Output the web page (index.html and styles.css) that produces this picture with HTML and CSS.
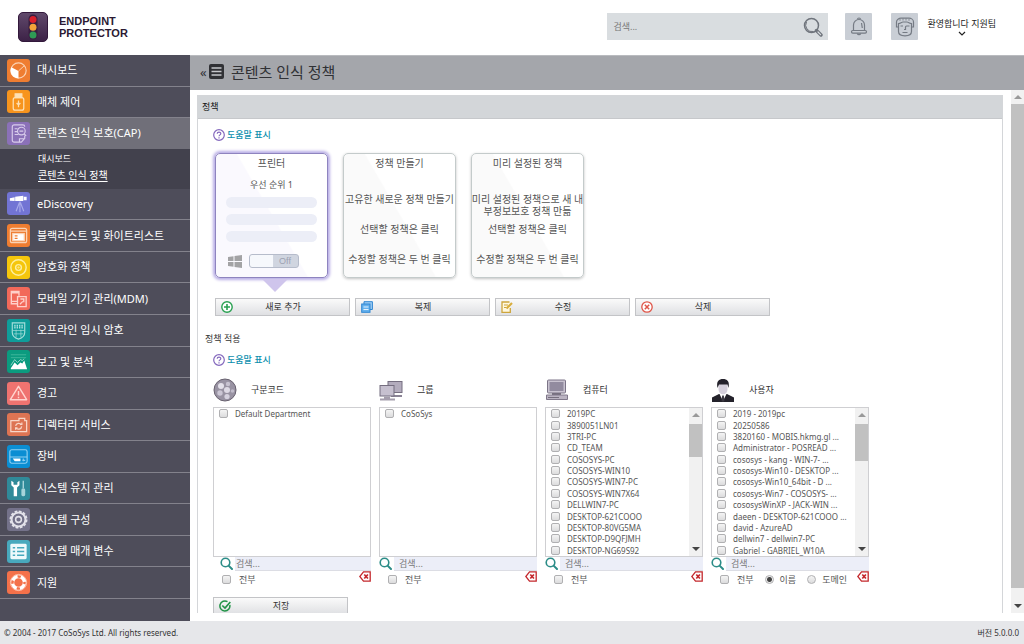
FILE: index.html
```html
<!DOCTYPE html>
<html lang="ko">
<head>
<meta charset="utf-8">
<meta name="viewport" content="width=device-width, initial-scale=1">
<title>Endpoint Protector</title>
<link rel="stylesheet" href="styles.css">
</head>
<body>
<svg class="sprite" aria-hidden="true">
  <symbol id="i-help" viewBox="0 0 12 12"><circle cx="6" cy="6" r="5.3" fill="#fff" stroke="#8468bd" stroke-width="1.2"/><path d="M4.2 4.8C4.2 2.5 7.8 2.5 7.8 4.7 7.8 5.9 6 5.900 6 7.300M6 8.300V9.400" fill="none" stroke="#8468bd" stroke-width="1.200"/></symbol>
  <symbol id="i-find" viewBox="0 0 13 13"><circle cx="5.500" cy="5.500" r="4.300" fill="none" stroke="#2c8d88" stroke-width="1.600"/><path d="M8.600 8.600L12 12" stroke="#2c8d88" stroke-width="2" stroke-linecap="round"/></symbol>
  <symbol id="i-clear" viewBox="0 0 12 11"><path d="M4.500.8H11.200V10.200H4.500L.8 5.500Z" fill="#fff" stroke="#c4282d" stroke-width="1.300"/><path d="M5.300 3.500L8.900 7.500M8.900 3.500L5.300 7.500" stroke="#c4282d" stroke-width="1.700"/></symbol>
</svg>

<header class="top">
  <a class="brand" href="#">
    <svg class="brand-mark" viewBox="0 0 30 30" aria-hidden="true">
      <defs><linearGradient id="lg" x1="0" y1="0" x2="0" y2="1"><stop offset="0" stop-color="#614a6c"/><stop offset="1" stop-color="#3c2146"/></linearGradient></defs>
      <rect x=".5" y=".5" width="29" height="29" rx="4.500" fill="url(#lg)" stroke="#32183b"/>
      <rect x="10.500" y="2.500" width="9" height="25" rx="4.500" fill="#381e40"/>
      <circle cx="15" cy="7.500" r="3.500" fill="#d91f2c"/><circle cx="15" cy="15.200" r="3.500" fill="#f2a33a"/><circle cx="15" cy="23" r="3.500" fill="#2f9a55"/>
    </svg>
    <span class="brand-name">ENDPOINT<br>PROTECTOR</span>
  </a>
  <form class="search">
    <input type="text" placeholder="검색..." aria-label="검색">
    <button type="button" aria-label="검색 실행"><svg viewBox="0 0 20 20"><circle cx="8.500" cy="8.500" r="7" fill="none" stroke="#6f747c" stroke-width="1.500"/><path d="M3.500 5a6.500 6.500 0 0 0 7 9.500" fill="none" stroke="#6f747c"/><path d="M13.500 13.500L18 18" stroke="#6f747c" stroke-width="3.400" stroke-linecap="round"/><path d="M15 15L17.600 17.600" stroke="#d9dde0" stroke-width="1.200" stroke-linecap="round"/></svg></button>
  </form>
  <button class="square" type="button" aria-label="알림"><svg viewBox="0 0 20 20" fill="none" stroke="#757b84" stroke-width="1.200"><path d="M4.500 13.500V8a5.500 5.500 0 0 1 11 0v5.500"/><rect x="2.500" y="13.500" width="15" height="2.600" rx="1.300"/><path d="M8.500 2.500a1.500 1.500 0 0 1 3 0M8.300 16.500a1.800 1.800 0 0 0 3.400 0M12.500 6l.8 5"/></svg></button>
  <button class="square user-face" type="button" aria-label="프로필"><svg viewBox="0 0 20 20" fill="none" stroke="#757b84" stroke-width="1.200"><path d="M3.500 6.500V14.500C3.500 17.500 5.500 18.800 10 18.800s6.500-1.300 6.500-4.300V6.500C14.500 6.500 13.500 5 12 5H8C6.500 5 5.500 6.500 3.500 6.500Z"/><path d="M3 10H1.500V5C1.500 2.500 4 1.200 6 1.200H14C16 1.200 18.500 2.500 18.500 5V10H17"/><path d="M5 3.800V2M8 3.500V1.500M11 3.500V1.500M14 3.800V2" stroke-width=".8"/><path d="M5.500 9H8M14.500 9H11.500C10.800 9 10.500 9.500 10.500 10V12.500H9M7.500 15.500H12.500"/></svg></button>
  <button class="welcome" type="button"><span>환영합니다 지원팀</span><svg viewBox="0 0 8 5"><path d="M1 1L4 4L7 1" fill="none" stroke="#222" stroke-width="1.200"/></svg></button>
</header>

<div class="middle">
  <nav class="side">
    <ul class="menu">
      <li><a href="#"><svg class="tile orange" viewBox="0 0 24 24"><circle cx="12" cy="12" r="8" fill="none" stroke="#fbd3b5" stroke-width="1.200"/><path d="M12 12.500V20A8 8 0 0 1 4.500 8.500Z" fill="#fff"/><path d="M12 12.500L18 7" stroke="#fbd3b5"/></svg><span>대시보드</span></a></li>
      <li><a href="#"><svg class="tile amber" viewBox="0 0 24 24" fill="none" stroke="#fde0b4" stroke-width="1.300"><path d="M8.500 4h7v4h-7z" fill="#fde0b4"/><rect x="6.500" y="8" width="11" height="13" rx="2"/><path d="M12 18V11M10 13.500l2 2 2-2"/></svg><span>매체 제어</span></a></li>
      <li class="active"><a href="#"><svg class="tile violet" viewBox="0 0 24 24" fill="none" stroke="#d9cdec" stroke-width="1.200"><path d="M13 21H7.500a2 2 0 0 1-2-2V5a2 2 0 0 1 2-2H16.500a2 2 0 0 1 2 2M18.500 14V17L15 21H13V17.500H18"/><circle cx="15" cy="9.500" r="4"/><path d="M8 7h3M8 10h3M8 13h4M13 9.500h4M18 12.500l2 2"/></svg><span>콘텐츠 인식 보호(CAP)</span></a>
        <ul class="submenu"><li><a href="#">대시보드</a></li><li><a class="current" href="#">콘텐츠 인식 정책</a></li></ul></li>
      <li><a href="#"><svg class="tile indigo" viewBox="0 0 24 24"><path d="M3 6.500L8 5.500V9.500L3 9Z M8.500 5L17 4V9.500L8.500 9.500Z M17.500 5H20.500V8.500H17.500Z" fill="#fff"/><path d="M13.500 10V21M13 11L9.500 20M14 11L17.500 20" stroke="#a8aaea" stroke-width="1.200"/></svg><span>eDiscovery</span></a></li>
      <li><a href="#"><svg class="tile orange" viewBox="0 0 24 24" fill="none" stroke="#fbd3b5" stroke-width="1.300"><rect x="3.500" y="4.500" width="17" height="15" rx="2"/><path d="M4 7.500H20"/><rect x="6" y="10" width="12" height="7.500" fill="#fff"/><path d="M8 12.500h3M8 15h3" stroke="#ef7d31"/></svg><span>블랙리스트 및 화이트리스트</span></a></li>
      <li><a href="#"><svg class="tile yellow" viewBox="0 0 24 24" fill="none" stroke="#fdee9d" stroke-width="1.500"><circle cx="12" cy="12" r="8"/><circle cx="12" cy="12" r="3"/><circle cx="12" cy="12" r=".4"/></svg><span>암호화 정책</span></a></li>
      <li><a href="#"><svg class="tile coral" viewBox="0 0 24 24" fill="none" stroke="#ffd0c9" stroke-width="1.400"><path d="M10.500 17.500H4.500V4.500H12.500V9"/><path d="M4.500 15H10.500M4.500 6H12.500"/><path d="M11 10H20V20.500H11Z"/><path d="M14 12.500h3.500v3.500M13.500 18l3-3"/></svg><span>모바일 기기 관리(MDM)</span></a></li>
      <li><a href="#"><svg class="tile teal" viewBox="0 0 24 24" fill="none" stroke="#a5dedb" stroke-width="1.200"><path d="M5.500 4H18.500V14C18.500 18 15 20 12 21 9 20 5.500 18 5.500 14Z"/><path d="M7.500 7h9M7.500 9h9" stroke-dasharray="1.500 1" stroke-width="1.800"/><path d="M6 12h12M7 15.500h10M9.500 11v8M14.500 11v8" stroke-width=".7"/></svg><span>오프라인 임시 암호</span></a></li>
      <li><a href="#"><svg class="tile green" viewBox="0 0 24 24"><path d="M4 5h16M4 8h16" stroke="#4dbda2" stroke-width=".8"/><path d="M4 20V19L8 13L11 16L14 13L16 14L18 11L21 20Z" fill="#fff"/><path d="M4 16L8 10L11 13L14 10L16 11L18 9" fill="none" stroke="#b5e4da" stroke-width=".8"/></svg><span>보고 및 분석</span></a></li>
      <li><a href="#"><svg class="tile salmon" viewBox="0 0 24 24" fill="none" stroke="#ffd3ce" stroke-width="1.500" stroke-linejoin="round"><path d="M12 4.500L20.500 18.500H3.500Z"/><path d="M12 9.500V14M12 15.500V17"/></svg><span>경고</span></a></li>
      <li><a href="#"><svg class="tile rust" viewBox="0 0 24 24" fill="none" stroke="#f8d6c8" stroke-width="1.300"><path d="M4 8H12.500V5.500H18.500V8H20.500V19.500H4Z"/><path d="M9 13.500a3.200 3.200 0 0 1 6-1M15.300 14a3.200 3.200 0 0 1-6 1.200M13.500 12h2v-2M11 15.500h-2v2"/></svg><span>디렉터리 서비스</span></a></li>
      <li><a href="#"><svg class="tile blue" viewBox="0 0 24 24" fill="none" stroke="#8fd0f2" stroke-width="1.200"><rect x="3" y="5" width="18" height="14" rx="2"/><path d="M3 12.500H21"/><path d="M6 14H14V17H8Z" fill="#fff" stroke="none"/><path d="M16 16h3M17 14v3"/></svg><span>장비</span></a></li>
      <li><a href="#"><svg class="tile petrol" viewBox="0 0 24 24"><path d="M4.500 4V8.500L7 11V20H10.500V11L13 8.500V4L10.800 5.500V8H6.800V5.500Z" fill="#fff"/><path d="M17 4V12" stroke="#a7d4da" stroke-width="1.500"/><rect x="15" y="12" width="4" height="8" rx="1.500" fill="#a7d4da"/></svg><span>시스템 유지 관리</span></a></li>
      <li><a href="#"><svg class="tile slate" viewBox="0 0 24 24" fill="none" stroke="#e3e2ea"><circle cx="12" cy="12" r="7.200" stroke-width="2"/><circle cx="12" cy="12" r="8.500" stroke-width="1.800" stroke-dasharray="3 1.450"/><circle cx="12" cy="12" r="3" stroke-width="1.600"/></svg><span>시스템 구성</span></a></li>
      <li><a href="#"><svg class="tile aqua" viewBox="0 0 24 24"><rect x="3.500" y="4" width="17" height="16" rx="1.500" fill="#eef9fb"/><path d="M6 8h2.500M6 12h2.500M6 16h2.500M10.500 8h7.500M10.500 12h7.500M10.500 16h7.500" stroke="#48a9bd" stroke-width="1.500"/></svg><span>시스템 매개 변수</span></a></li>
      <li><a href="#"><svg class="tile tomato" viewBox="0 0 24 24" fill="none"><circle cx="12" cy="12" r="6.300" stroke="#fff" stroke-width="3.600"/><circle cx="12" cy="12" r="6.300" stroke="#f4714a" stroke-width="2.600" stroke-dasharray="3.500 6.400" stroke-dashoffset="1.800"/><circle cx="12" cy="12" r="8.500" stroke="#ffd0bd" stroke-width=".8"/></svg><span>지원</span></a></li>
    </ul>
  </nav>

  <main class="main">
    <div class="titlebar">
      <span class="back">«</span>
      <svg viewBox="0 0 15 15" aria-hidden="true"><rect width="15" height="15" rx="2" fill="#303135"/><path d="M2.500 4H12.500M2.500 7.500H12.500M2.500 11H12.500" stroke="#c5c7cb" stroke-width="1.400"/></svg>
      <h1>콘텐츠 인식 정책</h1>
    </div>
    <div class="viewport">
      <section class="panel">
        <h2>정책</h2>
        <div class="panel-body">
          <a class="help" href="#"><svg><use href="#i-help"/></svg>도움말 표시</a>
          <div class="cards">
            <article class="card selected">
              <h3>프린터</h3>
              <p class="priority">우선 순위 1</p>
              <div class="bars"><i></i><i></i><i></i></div>
              <div class="switch-row">
                <svg viewBox="0 0 14 13" aria-hidden="true"><path d="M0 2L5.500 1.200V6H0ZM6.500 1L14 0V6H6.500ZM0 7H5.500V11.800L0 11ZM6.500 7H14V13L6.500 12Z" fill="#a3a3a5"/></svg>
                <button class="switch" type="button" role="switch" aria-checked="false">Off</button>
              </div>
            </article>
            <article class="card"><h3>정책 만들기</h3><p class="text first">고유한 새로운 정책 만들기</p><p class="text">선택할 정책은 클릭</p><p class="text">수정할 정책은 두 번 클릭</p></article>
            <article class="card"><h3>미리 설정된 정책</h3><p class="text first">미리 설정된 정책으로 새 내부정보보호 정책 만듦</p><p class="text">선택할 정책은 클릭</p><p class="text">수정할 정책은 두 번 클릭</p></article>
          </div>
          <div class="actions">
            <button class="btn" type="button"><svg viewBox="0 0 12 12"><circle cx="6" cy="6" r="5.200" fill="#fff" stroke="#28a050" stroke-width="1.400"/><path d="M6 3V9M3 6H9" stroke="#28a050" stroke-width="1.600"/></svg><span>새로 추가</span></button>
            <button class="btn" type="button"><svg viewBox="0 0 12 12"><path d="M3 3V.7H11.400V8.500H9" fill="#9fcdf3" stroke="#2f86d2"/><rect x=".7" y="3" width="8.300" height="8.300" fill="#65b1ee" stroke="#2f86d2"/><path d="M2.500 6h5M2.500 8.500h5" stroke="#e4f2fd"/></svg><span>복제</span></button>
            <button class="btn" type="button"><svg viewBox="0 0 12 12"><path d="M8.500 1H1V11.300H9.300V7" fill="#fff8df" stroke="#cda53c" stroke-width="1.300"/><path d="M3 4h4M3 6.500h2" stroke="#cda53c"/><path d="M5.500 7.500L11 2" stroke="#d8ad3d" stroke-width="2.200"/></svg><span>수정</span></button>
            <button class="btn" type="button"><svg viewBox="0 0 12 12"><circle cx="6" cy="6" r="5.200" fill="#fff" stroke="#df5548" stroke-width="1.300"/><path d="M3.800 3.800L8.200 8.200M8.200 3.800L3.800 8.200" stroke="#df5548" stroke-width="1.500"/></svg><span>삭제</span></button>
          </div>
        </div>
        <h2 class="plain">정책 적용</h2>
        <div class="panel-body apply">
          <a class="help" href="#"><svg><use href="#i-help"/></svg>도움말 표시</a>
          <div class="columns">
            <section class="col">
              <h3><svg viewBox="0 0 24 24"><circle cx="12" cy="12" r="11" fill="#9993a3" stroke="#68616f"/><circle cx="8" cy="8" r="3" fill="#e4e1ea"/><circle cx="15" cy="6" r="2.200" fill="#c7c2d0"/><circle cx="14" cy="12" r="3" fill="#dedae5"/><circle cx="7" cy="15" r="2.700" fill="#cbc6d4"/><circle cx="14" cy="18.500" r="2.600" fill="#d6d2df"/><circle cx="19.500" cy="13" r="1.800" fill="#c1bccb"/></svg>구분코드</h3>
              <div class="list"><ul><li><label><input type="checkbox">Default Department</label></li></ul></div>
              <div class="filter"><svg><use href="#i-find"/></svg><input type="text" placeholder="검색..." aria-label="구분코드 검색"></div>
              <div class="options"><label><input type="checkbox">전부</label><button type="button" aria-label="지우기"><svg><use href="#i-clear"/></svg></button></div>
            </section>
            <section class="col">
              <h3><svg viewBox="0 0 24 24"><rect x="9" y="3.500" width="14" height="11" fill="#b3acbd" stroke="#756e80"/><path d="M12 17H23V19H12Z" fill="#8b8496"/><rect x="1" y="7.500" width="14" height="10.500" fill="#c6c0cf" stroke="#756e80"/><path d="M5 18.500H11V20.500H5ZM1 20.500H16V22.500H1Z" fill="#a49dac"/></svg>그룹</h3>
              <div class="list"><ul><li><label><input type="checkbox">CoSoSys</label></li></ul></div>
              <div class="filter"><svg><use href="#i-find"/></svg><input type="text" placeholder="검색..." aria-label="그룹 검색"></div>
              <div class="options"><label><input type="checkbox">전부</label><button type="button" aria-label="지우기"><svg><use href="#i-clear"/></svg></button></div>
            </section>
            <section class="col">
              <h3><svg viewBox="0 0 24 24"><rect x="2.500" y="2" width="18" height="13" rx="1" fill="#c9c3d0" stroke="#7c7588"/><rect x="4.500" y="4" width="14" height="9" fill="#928b9f"/><path d="M7 15H16V17H7Z" fill="#77707f"/><path d="M1.500 17H22.500V21.500H1.500Z" fill="#bbb4c2" stroke="#81798b"/><path d="M3 19.500H14" stroke="#77707f"/></svg>컴퓨터</h3>
              <div class="list">
                <ul>
                  <li><label><input type="checkbox">2019PC</label></li><li><label><input type="checkbox">3890051LN01</label></li><li><label><input type="checkbox">3TRI-PC</label></li><li><label><input type="checkbox">CD_TEAM</label></li><li><label><input type="checkbox">COSOSYS-PC</label></li><li><label><input type="checkbox">COSOSYS-WIN10</label></li><li><label><input type="checkbox">COSOSYS-WIN7-PC</label></li><li><label><input type="checkbox">COSOSYS-WIN7X64</label></li><li><label><input type="checkbox">DELLWIN7-PC</label></li><li><label><input type="checkbox">DESKTOP-621COOO</label></li><li><label><input type="checkbox">DESKTOP-80VG5MA</label></li><li><label><input type="checkbox">DESKTOP-D9QFJMH</label></li><li><label><input type="checkbox">DESKTOP-NG69S92</label></li>
                </ul>
                <div class="scroll small"><b class="up"></b><i></i><b class="down"></b></div>
              </div>
              <div class="filter"><svg><use href="#i-find"/></svg><input type="text" placeholder="검색..." aria-label="컴퓨터 검색"></div>
              <div class="options"><label><input type="checkbox">전부</label><button type="button" aria-label="지우기"><svg><use href="#i-clear"/></svg></button></div>
            </section>
            <section class="col">
              <h3><svg viewBox="0 0 24 24"><path d="M1 24V19.500L8 16H16L23 19.500V24Z" fill="#24222b"/><path d="M8.500 16L12 23L15.500 16Z" fill="#fff"/><path d="M11.200 17.500h1.600l.7 5L12 24l-1.500-1.500Z" fill="#3a3842"/><path d="M7.500 6H16.500V11C16.500 18 7.500 18 7.500 11Z" fill="#d5d0dc"/><path d="M6.500 10C5 3 8 1 12 1S19 3 17.500 10L16.500 6.500H8Z" fill="#24222b"/></svg>사용자</h3>
              <div class="list">
                <ul>
                  <li><label><input type="checkbox">2019 - 2019pc</label></li><li><label><input type="checkbox">20250586</label></li><li><label><input type="checkbox">3820160 - MOBIS.hkmg.gl ...</label></li><li><label><input type="checkbox">Administrator - POSREAD ...</label></li><li><label><input type="checkbox">cososys - kang - WIN-7- ...</label></li><li><label><input type="checkbox">cososys-Win10 - DESKTOP ...</label></li><li><label><input type="checkbox">cososys-Win10_64bit - D ...</label></li><li><label><input type="checkbox">cososys-Win7 - COSOSYS- ...</label></li><li><label><input type="checkbox">cososysWinXP - JACK-WIN ...</label></li><li><label><input type="checkbox">daeen - DESKTOP-621COOO ...</label></li><li><label><input type="checkbox">david - AzureAD</label></li><li><label><input type="checkbox">dellwin7 - dellwin7-PC</label></li><li><label><input type="checkbox">Gabriel - GABRIEL_W10A</label></li>
                </ul>
                <div class="scroll small"><b class="up"></b><i class="long"></i><b class="down"></b></div>
              </div>
              <div class="filter"><svg><use href="#i-find"/></svg><input type="text" placeholder="검색..." aria-label="사용자 검색"></div>
              <div class="options"><label><input type="checkbox">전부</label><label class="radio"><input type="radio" name="by" checked>이름</label><label class="radio"><input type="radio" name="by">도메인</label><button type="button" aria-label="지우기"><svg><use href="#i-clear"/></svg></button></div>
            </section>
          </div>
          <button class="btn save" type="button"><svg viewBox="0 0 12 12"><path d="M10.800 5A5 5 0 1 1 8.500 1.700" fill="none" stroke="#239448" stroke-width="1.500"/><path d="M3.300 5.500L6 8L11.300 2" fill="none" stroke="#239448" stroke-width="1.700"/></svg><span>저장</span></button>
        </div>
      </section>
      <div class="scroll page"><b class="up"></b><i></i><b class="down"></b></div>
    </div>
  </main>
</div>

<footer class="foot"><span>© 2004 - 2017 CoSoSys Ltd. All rights reserved.</span><span>버전 5.0.0.0</span></footer>
</body>
</html>
```

FILE: styles.css
```css
* { box-sizing: border-box; }
body {
  margin: 0;
  height: 100vh;
  display: flex;
  flex-direction: column;
  overflow: hidden;
  background: #fff;
  color: #444;
  font: 9px/16px "Noto Sans", "Noto Sans CJK KR", sans-serif;
}
h1, h2, h3, p, ul { margin: 0; padding: 0; font-weight: 400; }
ul { list-style: none; }
a { color: inherit; text-decoration: none; }
button, input { font: inherit; color: inherit; margin: 0; padding: 0; border: 0; background: none; }
svg { display: block; flex: none; }
.sprite { position: absolute; width: 0; height: 0; }

/* header */
.top { flex: none; height: 55px; display: flex; align-items: center; padding: 0 28px 2px 18px; }
.brand { display: flex; align-items: center; gap: 11px; margin-right: auto; }
.brand-mark { width: 30px; height: 30px; }
.brand-name { font: bold 11px/12px "Liberation Sans", sans-serif; color: #2b1a33; }
.search { display: flex; align-items: center; width: 221px; height: 27px; padding: 0 5px 0 6px; background: #d9dde0; }
.search input { flex: 1; min-width: 0; outline: 0; }
.search svg { width: 20px; height: 20px; }
::placeholder { color: #777; opacity: 1; }
.square { display: grid; place-items: center; width: 27px; height: 27px; margin-left: 17px; background: #c9ced5; border-radius: 1px; }
.user-face { margin-left: 19px; }
.square svg { width: 20px; height: 20px; }
.welcome { display: flex; flex-direction: column; align-items: center; margin-left: 9px; color: #222; line-height: 14px; }
.welcome svg { width: 8px; height: 5px; }

/* navigation */
.middle { flex: 1; min-height: 0; display: flex; }
.side { flex: none; width: 190px; display: flex; background: #4e4d5a; padding-bottom: 22px; }
.menu { flex: 1; display: flex; flex-direction: column; color: #fff; font-size: 11px; }
.menu > li { flex: 1 0 0; border-bottom: 1px solid #83828c; }
.menu > li > a { height: 100%; display: flex; align-items: center; gap: 7px; padding-left: 7px; }
.menu > .active { flex: 1 0 40px; display: flex; flex-direction: column; border: 0; }
.menu > .active > a { flex: 1; height: auto; background: #706f79; }
.submenu { flex: none; height: 40px; padding: 2px 0 0 38px; background: #42414d; font-size: 10px; }
.submenu li { line-height: 16px; }
.submenu li:first-child { font-size: 9px; }
.current { text-decoration: underline; text-underline-offset: 2px; }
.tile { width: 23px; height: 23px; border-radius: 3px; }
.orange { background: #ef7d31; }
.amber { background: #f7941d; }
.violet { background: #8b71b8; }
.indigo { background: #7274d4; }
.yellow { background: #f5c60c; }
.coral { background: #f2695a; }
.teal { background: #0f9d9a; }
.green { background: #0b9b7f; }
.salmon { background: #ef7370; }
.rust { background: #dd7453; }
.blue { background: #0b8ed3; }
.petrol { background: #308a99; }
.slate { background: #74728a; }
.aqua { background: #48a9bd; }
.tomato { background: #f4714a; }

/* page title */
.main { flex: 1; min-width: 0; display: flex; flex-direction: column; }
.titlebar { flex: none; height: 35px; display: flex; align-items: center; padding: 0 0 3px 10px; background: #a4a6ab; border-top: 1px solid #b9bbbf; color: #303135; }
.titlebar svg { width: 15px; height: 15px; }
.titlebar h1 { margin-left: 7px; font-size: 15px; line-height: 24px; }
.back { width: 9px; font-size: 13px; }

/* scrolled panel */
.viewport { flex: 1; min-height: 0; display: flex; margin-bottom: 8px; }
.panel { flex: 1; min-width: 0; overflow: hidden; margin: 5px 8px 0 7px; border: 1px solid #d4d6d9; border-bottom: 0; }
.panel h2 { height: 23px; padding-left: 4px; background: #d3d6d9; border-bottom: 1px solid #c6c8cb; font-size: 9px; line-height: 22px; color: #111; }
.panel .plain { height: 16px; margin-top: 15px; padding-left: 7px; background: none; border: 0; line-height: 16px; color: #333; }
.panel-body { padding: 8px 15px 0; }
.panel-body.apply { padding-top: 5px; }
.help { display: flex; align-items: center; gap: 2px; width: max-content; color: #0c8fae; font-weight: 500; }
.help svg { width: 12px; height: 12px; }

.cards { display: flex; gap: 15px; margin: 10px 2px 0; }
.card { position: relative; width: 113px; height: 125px; border: 1px solid #c4cbcb; border-radius: 5px; background: linear-gradient(60deg, #fafafa 50%, #fff 51%); box-shadow: 0 1px 3px #c2c2c2; font-size: 10px; text-align: center; color: #555; }
.card h3 { font-size: 10px; line-height: 18px; }
.text { height: 30px; line-height: 12px; margin: 0 -1px; word-break: break-all; }
.text.first { margin-top: 21px; }
.selected { border-color: #8e84bf; box-shadow: 0 0 3px 2px #b9aee6; background: linear-gradient(60deg, #faf9fe 50%, #fff 51%); }
.selected::after { content: ""; position: absolute; left: 46px; top: 125px; border: solid transparent; border-width: 13px 13px 0; border-top-color: #cfc5ec; }
.priority { margin-top: 4px; font-size: 9px; line-height: 18px; }
.bars { display: grid; gap: 6px; margin: 3px 10px 0; }
.bars i { height: 11px; border-radius: 6px; background: #eceef7; }
.switch-row { display: flex; align-items: center; gap: 7px; margin: 12px 0 0 12px; }
.switch-row svg { width: 14px; height: 13px; }
.switch { width: 50px; height: 14px; padding-left: 22px; border: 1px solid #b6bccb; border-radius: 3px; background: linear-gradient(90deg, #f6f8fc 48%, #d0d5e0 49%); color: #9da2b2; font: 9px/12px "Liberation Sans", sans-serif; }

.actions { display: flex; gap: 5px; margin: 20px 2px 0; }
.btn { display: flex; align-items: center; width: 135px; height: 18px; padding-left: 5px; border: 1px solid #c3c4c7; background: linear-gradient(#fafafa, #dfe0e3); color: #333; }
.btn svg { width: 12px; height: 12px; }
.btn span { flex: 1; padding-right: 16px; }

/* assignment columns */
.columns { display: flex; gap: 8px; margin-top: 10px; }
.col { width: 158px; }
.col h3 { height: 24px; display: flex; align-items: center; gap: 14px; margin-bottom: 5px; font-size: 9px; color: #333; }
.col h3 svg { width: 24px; height: 24px; }
.list { display: flex; height: 150px; overflow: hidden; border: 1px solid #cfcfd2; font-size: 8px; color: #555; }
.list ul { flex: 1; min-width: 0; display: grid; grid-template-rows: repeat(13, 1fr); }
.list label { display: flex; align-items: center; gap: 7px; height: 100%; padding-left: 5px; line-height: 11px; white-space: nowrap; }
input[type=checkbox], input[type=radio] { flex: none; appearance: none; width: 9px; height: 9px; border: 1px solid #b0b0b2; border-radius: 2px; background: linear-gradient(#f4f4f4, #dcdcdd); }
input[type=radio] { border-radius: 50%; }
input[type=radio]:checked { background: radial-gradient(circle, #444 2px, #eee 3px); }
.filter { display: flex; height: 14px; }
.filter svg { width: 13px; height: 13px; margin-right: 2px; }
.filter input { flex: 1; min-width: 0; padding-left: 5px; background: #eceef8; border-bottom: 1px solid #dcdde4; line-height: 13px; }
.col:first-child .filter { padding-left: 7px; }
.col:first-child .filter input { padding-left: 1px; }
.options { display: flex; align-items: center; height: 17px; padding-left: 9px; color: #555; }
.options label { display: flex; align-items: center; gap: 8px; }
.options .radio { margin-left: 11px; gap: 6px; }
.options button { align-self: flex-start; margin-left: auto; }
.options svg { width: 12px; height: 11px; }
.save { margin-top: 9px; }

/* scroll rails */
.scroll { flex: none; display: flex; flex-direction: column; width: 13px; background: #f1f1f1; }
.scroll b { flex: none; height: 14px; display: grid; place-items: center; }
.scroll b::before { content: ""; border: 4px solid transparent; border-top-width: 0; border-bottom: 4px solid #999; }
.scroll .down { margin-top: auto; }
.scroll .down::before { border-top: 4px solid #444; border-bottom-width: 0; }
.scroll i { background: #c1c1c1; }
.page i { flex: 1; margin-bottom: 11px; }
.small i { height: 33px; margin-top: 2px; }
.small .long { height: 37px; }

.foot { flex: none; height: 23px; display: flex; align-items: center; justify-content: space-between; padding: 0 5px 0 4px; background: #e6e7ea; font-size: 8px; color: #333; }
```
